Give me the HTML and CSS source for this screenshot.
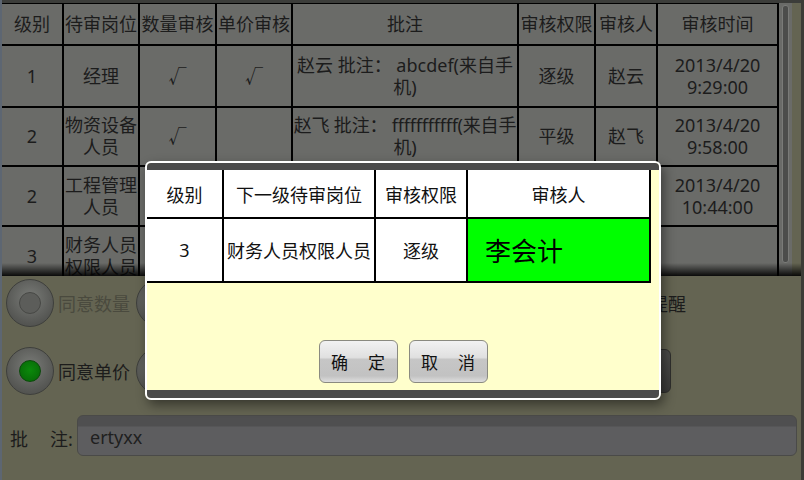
FILE: index.html
```html
<!DOCTYPE html>
<html lang="zh-CN">
<head>
    <meta charset="UTF-8">
    <meta name="viewport" content="width=device-width, initial-scale=1.0">
    <title>审核流程</title>
    <link rel="stylesheet" href="styles.css">
</head>
<body>

<div class="screen">

    <!-- 审核记录表 -->
    <div class="grid-area">
        <table class="flow">
            <colgroup>
                <col style="width:61px"><col style="width:76px"><col style="width:77px"><col style="width:76px">
                <col style="width:226px"><col style="width:77px"><col style="width:62px"><col style="width:121px">
            </colgroup>
            <tr class="head">
                <th>级别</th><th>待审岗位</th><th>数量审核</th><th>单价审核</th>
                <th>批注</th><th>审核权限</th><th>审核人</th><th>审核时间</th>
            </tr>
            <tr class="r1">
                <td>1</td><td>经理</td><td>√</td><td>√</td>
                <td>赵云 批注： abcdef(来自手<br>机)</td><td>逐级</td><td>赵云</td><td>2013/4/20<br>9:29:00</td>
            </tr>
            <tr class="r2">
                <td>2</td><td>物资设备<br>人员</td><td>√</td><td></td>
                <td class="tight">赵飞 批注： fffffffffff(来自手<br>机)</td><td>平级</td><td>赵飞</td><td>2013/4/20<br>9:58:00</td>
            </tr>
            <tr class="r3">
                <td>2</td><td>工程管理<br>人员</td><td></td><td></td>
                <td></td><td></td><td></td><td>2013/4/20<br>10:44:00</td>
            </tr>
            <tr class="r4">
                <td>3</td><td>财务人员<br>权限人员</td><td></td><td></td>
                <td></td><td></td><td></td><td></td>
            </tr>
        </table>
        <div class="scroll-track"><div class="scroll-thumb"></div></div>
        <div class="fade"></div>
    </div>

    <!-- 审核选项 -->
    <div class="options">
        <div class="opt-row first">
            <span class="radio"><span class="dot"></span></span>
            <span class="opt-label muted">同意数量</span>
            <span class="radio"><span class="dot"></span></span>
            <span class="opt-end">短信提醒</span>
        </div>
        <div class="opt-row second">
            <span class="radio"><span class="dot on"></span></span>
            <span class="opt-label">同意单价</span>
            <span class="radio"><span class="dot"></span></span>
            <span class="dark-btn"></span>
        </div>
    </div>

    <div class="remark">
        <span class="remark-label">批<span class="gap"></span>注:</span>
        <div class="remark-input">ertyxx</div>
    </div>
</div>

<!-- 下一级审核对话框 -->
<div class="dialog">
    <div class="dlg-bar"></div>
    <table class="dlg-table">
        <colgroup>
            <col style="width:76px"><col style="width:152px"><col style="width:92px"><col style="width:183px">
        </colgroup>
        <tr class="dlg-head">
            <th>级别</th><th>下一级待审岗位</th><th>审核权限</th><th>审核人</th>
        </tr>
        <tr class="dlg-row">
            <td>3</td><td>财务人员权限人员</td><td>逐级</td><td class="picked">李会计</td>
        </tr>
    </table>
    <div class="dlg-actions">
        <button class="btn">确 定</button>
        <button class="btn">取 消</button>
    </div>
    <div class="dlg-bar bottom"></div>
</div>

</body>
</html>
```

FILE: styles.css
```css
body {
    margin: 0;
    width: 804px;
    height: 480px;
    overflow: hidden;
    position: relative;
    background-color: #646452;
    font-family: "Noto Sans", "Noto Sans CJK SC", sans-serif;
    color: #1c1c1c;
}
.screen {
    height: 480px;
    box-sizing: border-box;
    border-left: 2px solid #5d6672;
    border-right: 3px solid #3c3c36;
    display: flex;
    flex-direction: column;
}

/* 审核记录表 */
.grid-area {
    position: relative;
    display: flex;
    height: 273px;
    border-top: 3px solid #3c3d3a;
    overflow: hidden;
    flex-shrink: 0;
}
.flow {
    border-collapse: collapse;
    table-layout: fixed;
    width: 776px;
    background-color: #6a6b68;
    font-size: 18px;
    line-height: 22px;
    align-self: flex-start;
}
.flow th, .flow td {
    border: 2px solid #000;
    padding: 0;
    text-align: center;
    font-weight: normal;
    white-space: nowrap;
    overflow: hidden;
}
.flow tr > :first-child {
    border-left: none;
}
.flow .head th {
    border-top: 1px solid #000;
}
.flow .head { height: 41px; }
.flow .r1 { height: 62px; }
.flow .r2 { height: 59px; }
.flow .r3 { height: 60px; }
.flow .r4 { height: 60px; }
.flow .tight {
    letter-spacing: -0.2px;
}
.scroll-track {
    width: 13px;
    background-color: #6a6b68;
    padding: 2px 3px 0 3px;
    box-sizing: border-box;
}
.scroll-thumb {
    height: 258px;
    border-radius: 3px;
    background-color: #4c4d4b;
    border: 1px solid #7a7b78;
    box-sizing: border-box;
}
.fade {
    position: absolute;
    left: 0;
    right: 0;
    bottom: 0;
    height: 13px;
    background: linear-gradient(to bottom, rgba(0,0,0,0), rgba(0,0,0,0.9));
}

/* 审核选项 */
.options {
    display: flex;
    flex-direction: column;
    gap: 20px;
    padding: 3px 0 0 4px;
}
.opt-row {
    display: flex;
    align-items: center;
    height: 48px;
}
.opt-row.first { width: 680px; }
.opt-row.second { width: 665px; }
.radio {
    width: 46px;
    height: 46px;
    border-radius: 50%;
    border: 1px solid #3e3f3c;
    background: radial-gradient(circle at 50% 40%, #7a7c78, #555653 70%, #4a4b48);
    display: flex;
    align-items: center;
    justify-content: center;
    flex-shrink: 0;
}
.dot {
    width: 20px;
    height: 20px;
    border-radius: 50%;
    border: 1px solid #474845;
    background-color: #5c5d5a;
}
.dot.on {
    border-color: #0b4a0b;
    background: radial-gradient(circle at 50% 45%, #0b8a0b, #066306);
}
.opt-label {
    font-size: 18px;
    margin: 0 6px 0 4px;
    white-space: nowrap;
}
.opt-label.muted {
    color: #4a4a3e;
}
.opt-end {
    margin-left: auto;
    font-size: 18px;
}
.dark-btn {
    margin-left: auto;
    width: 110px;
    height: 42px;
    border-radius: 6px;
    border: 1px solid #2f2f2d;
    background: linear-gradient(to bottom, #4c4c4a, #3a3a39);
}

.remark {
    display: flex;
    align-items: center;
    margin-top: 20px;
    padding-left: 8px;
}
.remark-label {
    font-size: 18px;
    width: 67px;
    padding-top: 4px;
    white-space: nowrap;
}
.remark-label .gap {
    display: inline-block;
    width: 22px;
}
.remark-input {
    width: 720px;
    height: 41px;
    box-sizing: border-box;
    border-radius: 6px;
    border: 1px solid #4a4a48;
    background: linear-gradient(to bottom, #4f4f50 0, #4f4f50 10px, #5d5d5f 11px, #5d5d5f 100%);
    font-size: 18px;
    line-height: 36px;
    padding: 3px 0 0 12px;
    color: #202020;
}

/* 对话框 */
.dialog {
    position: absolute;
    left: 145px;
    top: 161px;
    width: 516px;
    height: 239px;
    box-sizing: border-box;
    border: 2px solid #fff;
    border-radius: 6px;
    background-color: #ffffcc;
    display: flex;
    flex-direction: column;
    overflow: hidden;
    box-shadow: 3px 5px 12px rgba(0, 0, 0, 0.45);
}
.dlg-bar {
    height: 7px;
    background-color: #4b4b4b;
    flex-shrink: 0;
}
.dlg-bar.bottom {
    height: 8px;
}
.dlg-table {
    border-collapse: collapse;
    table-layout: fixed;
    width: 503px;
    font-size: 18px;
    color: #111;
}
.dlg-table th, .dlg-table td {
    background-color: #fff;
    border: 2px solid #000;
    padding: 0;
    font-weight: normal;
    text-align: center;
    white-space: nowrap;
}
.dlg-table tr > :first-child {
    border-left: none;
}
.dlg-head th {
    border-top: none;
    height: 47px;
}
.dlg-row td {
    height: 62px;
}
.dlg-table td.picked {
    background-color: #00ff00;
    text-align: left;
    padding-left: 17px;
    font-size: 26px;
    color: #000;
}
.dlg-actions {
    flex: 1;
    display: flex;
    justify-content: center;
    align-items: flex-end;
    gap: 11px;
    padding-bottom: 7px;
}
.btn {
    width: 79px;
    height: 43px;
    border-radius: 6px;
    border: 1px solid #8a8a80;
    background: linear-gradient(to bottom, #f2f2f2 0%, #e0e0e0 40%, #c6c6c6 45%, #c2c2c2 85%, #dedede 100%);
    font-family: "Noto Sans CJK SC", sans-serif;
    font-size: 17px;
    word-spacing: 16px;
    color: #111;
    padding: 0;
}
```
